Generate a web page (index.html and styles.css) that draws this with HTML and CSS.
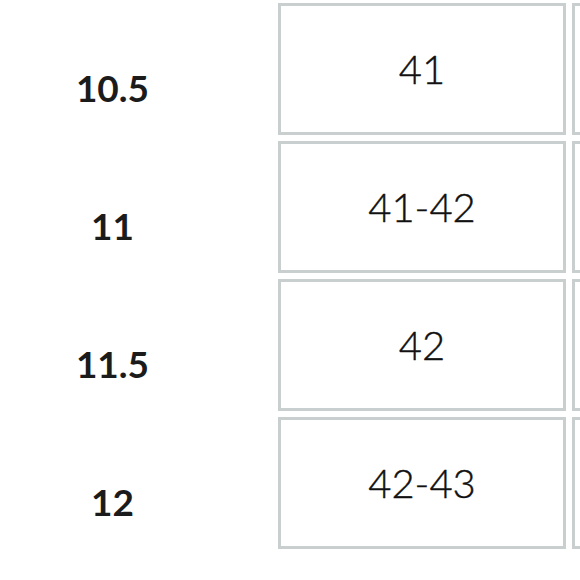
FILE: index.html
```html
<!DOCTYPE html>
<html>
<head>
<meta charset="utf-8">
<link rel="stylesheet" href="styles.css">
</head>
<body>
<div class="chart">
  <div class="label">10.5</div>
  <div class="cell">41</div>
  <div class="cell"></div>

  <div class="label">11</div>
  <div class="cell">41-42</div>
  <div class="cell"></div>

  <div class="label">11.5</div>
  <div class="cell">42</div>
  <div class="cell"></div>

  <div class="label">12</div>
  <div class="cell">42-43</div>
  <div class="cell"></div>
</div>
</body>
</html>
```
FILE: styles.css
```css
html, body {
  margin: 0;
  padding: 0;
  background: #ffffff;
  overflow: hidden;
  width: 580px;
  height: 580px;
}

.chart {
  display: grid;
  grid-template-columns: 272px 288px 288px;
  grid-auto-rows: 132px;
  column-gap: 6px;
  row-gap: 6px;
  padding-top: 3px;
  width: 580px;
  overflow: hidden;
  font-family: Lato, "Noto Sans", sans-serif;
}

.label {
  display: flex;
  align-items: center;
  justify-content: center;
  padding-top: 37px;
  padding-right: 47px;
  font-size: 37px;
  font-weight: 700;
  color: #1b1b1b;
}

.cell {
  display: flex;
  align-items: center;
  justify-content: center;
  box-sizing: border-box;
  border: 3px solid #c9cfce;
  font-size: 40px;
  font-weight: 300;
  color: #111111;
  -webkit-text-stroke: 0.4px #111111;
}
```
